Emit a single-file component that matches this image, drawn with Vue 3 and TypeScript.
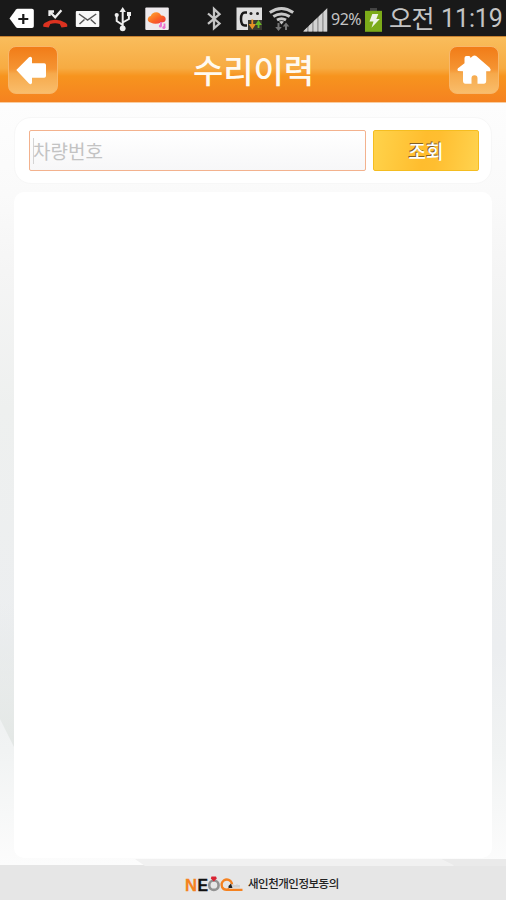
<script setup lang="ts">
import { ref } from 'vue'

const title = '수리이력'
const plate = ref('')
const signalBars = [0, 1, 2, 3, 4]
</script>

<template>
  <div class="screen">
    <div class="status">
      <div class="notifications">
        <svg width="26" height="36" viewBox="9 0 26 36">
          <path d="M9.5 18.5 16 9.5q.6-.8 1.6-.8H32q1.8 0 1.8 1.8v15.8q0 1.8-1.8 1.8H17.600q-1 0-1.600-.8z" fill="#fff" />
          <path d="M23.300 14v10M18.300 19h10" stroke="#191919" stroke-width="2.200" />
        </svg>
        <svg width="26" height="36" viewBox="42 0 26 36">
          <path d="M43.300 26.800q-.8-2.300 1.200-3.800 10.500-6.500 21.500 0 2 1.500 1.200 3.800l-5.700.700-1.700-3.500q-4.800-1.400-9.500 0l-1.600 3.500z" fill="#dc3220" />
          <path d="M49.500 16v-4.500h4.500M50 12l5.200 5.200 6.200-7" fill="none" stroke="#eee" stroke-width="2.300" />
        </svg>
        <svg width="25" height="36" viewBox="75 0 25 36">
          <rect x="75.800" y="11" width="23.500" height="16" rx="1" fill="#f8f8f8" />
          <path d="M79 14l8.600 6 8.600-6M79.500 24l5-4.500M95.700 24l-5-4.500" fill="none" stroke="#555" stroke-width="1.500" />
        </svg>
        <svg class="usb" width="18" height="36" viewBox="114 0 18 36" fill="none" stroke="#eee" stroke-width="2">
          <path d="M122.700 11v16M122.700 25l-6-4v-5M122.700 22.500l6.200-3.500v-4" />
          <path d="M119.500 12l3.200-5 3.200 5z" fill="#eee" stroke="none" />
          <circle cx="122.700" cy="28.300" r="2.900" fill="#eee" stroke="none" />
          <circle cx="116.700" cy="15" r="2.100" fill="#eee" stroke="none" />
          <path d="M127 12h4v4h-4z" fill="#eee" stroke="none" />
        </svg>
        <svg class="photo" width="25" height="36" viewBox="145 0 25 36">
          <defs>
            <linearGradient id="cloud" x1="0" y1="0" x2="1" y2="1">
              <stop offset="0" stop-color="#ffad31" />
              <stop offset=".55" stop-color="#fb6524" />
              <stop offset="1" stop-color="#ee3547" />
            </linearGradient>
          </defs>
          <rect x="145.300" y="7.500" width="23.500" height="22.500" rx="1" fill="#eeeaed" />
          <path d="M150.500 22.500q-3.200-1-2.700-3.800.5-2.500 3-2.700 1.500-3.800 5.500-3.700 3.800.3 4.700 3.200 4.500-.2 4.700 3.500.1 3.500-4.700 3.500-5.500 2.500-10.500 0z" fill="url(#cloud)" />
          <path d="M161 22v4M164.500 23.500v4.500" stroke="#ec72ce" stroke-width="1.800" />
          <circle cx="160.400" cy="26" r="1.500" fill="#ec72ce" />
          <circle cx="163.800" cy="27.500" r="1.500" fill="#ec72ce" />
        </svg>
      </div>
      <div class="system">
        <svg width="16" height="36" viewBox="206 0 16 36" fill="none" stroke="#c5c5c5" stroke-width="2.300">
          <path d="M208 13.500l11.500 10-5.500 4.800V9l5.500 5.200-11.500 9.600" />
        </svg>
        <svg class="profile" width="27" height="36" viewBox="236 0 27 36">
          <path d="M236.500 7.500h25.500v22.500h-25.500z" fill="#dedede" />
          <path d="M247 12.500h-2q-4 0-4 6.500t4 6.500h2" fill="none" stroke="#171717" stroke-width="2.500" />
          <circle cx="251" cy="13.500" r="1.500" fill="#222" /><circle cx="257.500" cy="13.500" r="1.500" fill="#222" />
          <path d="M248 20h14v10h-14z" fill="#3b3930" />
          <path d="M252.300 19.500v6M250.300 25h4l-2 3z" fill="#e69225" stroke="#e69225" stroke-width="1.800" />
          <path d="M258.500 28v-6M256.800 24h3.400l-1.700-2.500z" fill="#68b927" stroke="#68b927" stroke-width="1.800" />
        </svg>
        <svg class="wifi" width="27" height="36" viewBox="268 0 27 36">
          <g fill="none" stroke="#c8c8c8" stroke-width="3">
            <path d="M269.800 12.500q11.700-8 23.400 0M273.300 16.500q8.200-5.200 16.400 0M277 20q4.500-2.600 9 0" />
          </g>
          <path d="M279 21.500q2.500-1 5 0l-2.500 3z" fill="#c8c8c8" />
          <path d="M278.500 23v5M286 30v-5" stroke="#777" stroke-width="2" />
          <path d="M275.200 27h6.600l-3.300 4zM282.700 26.500h6.600l-3.300-4z" fill="#777" />
        </svg>
        <svg class="signal" width="25" height="36" viewBox="303 0 25 36">
          <defs><clipPath id="wedge"><path d="M303 31.500 327.500 8v23.500z" /></clipPath></defs>
          <g clip-path="url(#wedge)">
            <path d="M303 8h24.500v24H303z" fill="#888" />
            <rect v-for="bar in signalBars" :key="bar" :x="303.500 + bar * 5" y="8" width="3.800" height="24" fill="#d2d2d2" />
          </g>
        </svg>
        <span class="percent">92%</span>
        <svg class="battery" width="18" height="36" viewBox="365 0 18 36">
          <path d="M370 8h7v3h-7z" fill="#444" />
          <path d="M365 10.800h17v21h-17z" fill="#7cab19" />
          <path d="M372.300 14h6l-2 5h3.500l-8.300 8.800 2-6.300h-4z" fill="#eef3e6" />
        </svg>
        <span class="ampm">오전</span>
        <span class="clock">11:19</span>
      </div>
    </div>

    <header class="header">
      <button class="nav" aria-label="뒤로">
        <svg width="50" height="50" viewBox="0 0 50 50"><path d="M8.300 24 21 11.300q2.500-1.700 3 1v5h12.200q1.800 0 1.800 1.800v10.800q0 1.800-1.800 1.800H24v5q-.5 2.500-3 .8z" fill="#fff" /></svg>
      </button>
      <h1>{{ title }}</h1>
      <button class="nav" aria-label="홈">
        <svg width="50" height="50" viewBox="0 0 50 50"><path d="M9 25q-1.500-2 1-3.500l5.500-4.200V12q0-2 2-2h2.500q1.500 0 1.500 2l2-1.700q2-1.500 4 0l13 11.200q2 2 .7 3.700h-4v9.500q0 3-2.500 3h-6.200v-5.500q0-3-3-3t-3 3v5.500h-6q-2.500 0-2.500-3v-9.500z" fill="#fff" /></svg>
      </button>
    </header>

    <main class="content">
      <svg class="facets" width="506" height="763" viewBox="0 0 506 763" preserveAspectRatio="none">
        <path d="M0 500h14v144L0 616z" fill="url(#shade)" />
        <defs>
          <linearGradient id="shade" x1="0" y1="0" x2="0" y2="1">
            <stop offset="0" stop-color="#e3e7e5" stop-opacity="0" />
            <stop offset="1" stop-color="#e3e7e5" />
          </linearGradient>
        </defs>
        <path d="M135 756h306l14 7H145z" fill="#f1f1f1" />
        <path d="M441 756h65v7h-51z" fill="#eaeaea" />
      </svg>
      <form class="search" @submit.prevent>
        <label class="field"><span class="caret"></span><input v-model="plate" placeholder="차량번호" type="text" /></label>
        <button class="submit" type="submit">조회</button>
      </form>
      <section class="results"></section>
    </main>

    <footer class="footer">
      <svg class="logo" width="59" height="20" viewBox="184 873 59 20">
        <g class="letters">
          <text x="185" y="889.500" fill="#f58220" stroke="#f58220" textLength="12" lengthAdjust="spacingAndGlyphs">N</text>
          <text x="197.500" y="889.500" fill="#111" stroke="#111" textLength="10.500" lengthAdjust="spacingAndGlyphs">E</text>
        </g>
        <circle cx="213.900" cy="884.200" r="4.700" fill="none" stroke="#929292" stroke-width="2.600" />
        <path d="M211.500 875.500h4.500l.8 2-3 3-3-3z" fill="#d92332" />
        <path d="M229.500 888.200q-5.500 1.600-7.300-2-1.700-4 1.500-6.600 3.500-2.200 6.800.4 1.500 1.500 1.500 3.300M227 888.900h15.500" fill="none" stroke="#f58220" stroke-width="2.400" />
        <path d="M228.500 887v-2l2.500-2.500 1.500 4.500z" fill="#222" />
        <path d="M233 886.500v-3M235 886.500v-2.500M237 886.500v-3M239 886.500v-2.500" stroke="#bbb" />
      </svg>
      <span class="company">새인천개인정보동의</span>
    </footer>
  </div>
</template>

<style>
body { margin: 0; }
</style>

<style scoped>
.screen {
  display: flex;
  flex-direction: column;
  width: 506px;
  height: 900px;
  overflow: hidden;
  font-family: "Noto Sans CJK KR", sans-serif;
}
svg { display: block; flex: none; }
.status {
  display: flex;
  justify-content: space-between;
  height: 36px;
  padding: 0 3px 0 9px;
  box-sizing: border-box;
  background: #191919;
  color: #c4c4c4;
  line-height: 36px;
  white-space: nowrap;
}
.notifications, .system { display: flex; }
.notifications { gap: 7px; }
.usb { margin-left: 7px; }
.photo { margin-left: 6px; }
.profile { margin-left: 14px; }
.wifi { margin-left: 5px; }
.signal { margin-left: 8px; }
.percent { width: 34px; margin-left: 3px; font: 16px/38px "Noto Sans", sans-serif; letter-spacing: -.5px; }
.ampm { width: 47px; margin-left: 6px; font-size: 25px; line-height: 34px; letter-spacing: -.5px; }
.clock { width: 62px; margin-left: 5px; font: 25px/38px Roboto, sans-serif; letter-spacing: -.1px; }
.header {
  display: flex;
  align-items: center;
  justify-content: space-between;
  height: 67px;
  padding: 1px 7px 0 8px;
  box-sizing: border-box;
  border-top: 1px solid #c78030;
  border-bottom: 1px solid #f9cda0;
  background: linear-gradient(#f9bd5c, #f7ab42 48%, #f7941e 60%, #f58220);
}
.header h1 { margin: 0 0 2px; color: #fffaf0; font-size: 33px; font-weight: 500; line-height: 50px; letter-spacing: -.1px; }
.nav {
  width: 50px;
  height: 48px;
  padding: 0;
  border: 1px solid #f8b76a;
  border-radius: 8px;
  background: linear-gradient(#f17c18, #f59432 48%, #f6a94b 58%, #f9bd6b);
  overflow: hidden;
}
.nav svg { margin: -1px; }
.content {
  position: relative;
  display: flex;
  flex: 1;
  flex-direction: column;
  gap: 8px;
  padding: 14px 14px 7px;
  background: linear-gradient(#fdfdfd, #fafafa 12%, #f5f5f5 22%, #eef0ef 40%, #eceef0 72%, #f1f3f3 85%, #fcfcfc);
}
.facets { position: absolute; inset: 0; }
.search {
  position: relative;
  display: flex;
  gap: 7px;
  height: 67px;
  padding: 12px 12px 0 14px;
  box-sizing: border-box;
  border: 1px solid #f7f7f7;
  border-radius: 17px;
  background: #fff;
}
.field {
  display: flex;
  align-items: center;
  width: 337px;
  height: 41px;
  padding-left: 3px;
  box-sizing: border-box;
  border: 1px solid #f3b28e;
  border-radius: 2px;
  background: linear-gradient(#fff, #f7f7f8);
}
.caret { width: 1px; height: 26px; margin-right: -1px; background: #d4d4d4; }
.field input {
  width: 320px;
  padding: 0;
  border: 0;
  outline: 0;
  background: none;
  color: #555;
  font: 19px/28px "Noto Sans CJK KR", sans-serif;
}
.field input::placeholder { color: #c3c3c3; opacity: 1; }
.submit {
  width: 106px;
  height: 41px;
  padding: 1px 0 0;
  border: 1px solid #f5bd20;
  border-radius: 2px;
  background: linear-gradient(100deg, #ffd34b, #ffbd2e 48%, #ffbe30 60%, #ffd34f);
  color: #fff;
  font: 500 19px/28px "Noto Sans CJK KR", sans-serif;
  text-shadow: -1px -1px 0 #806026;
}
.results { position: relative; flex: 1; border-radius: 10px; background: #fff; }
.footer {
  display: flex;
  align-items: center;
  height: 35px;
  padding-left: 184px;
  background: #e6e6e6;
}
.logo { margin-top: 2px; }
.letters { font: bold 17px "Liberation Sans", sans-serif; stroke-width: .3px; }
.company { margin-left: 5px; color: #222; font-size: 11.500px; font-weight: 500; line-height: 20px; letter-spacing: -.5px; white-space: nowrap; }
</style>
